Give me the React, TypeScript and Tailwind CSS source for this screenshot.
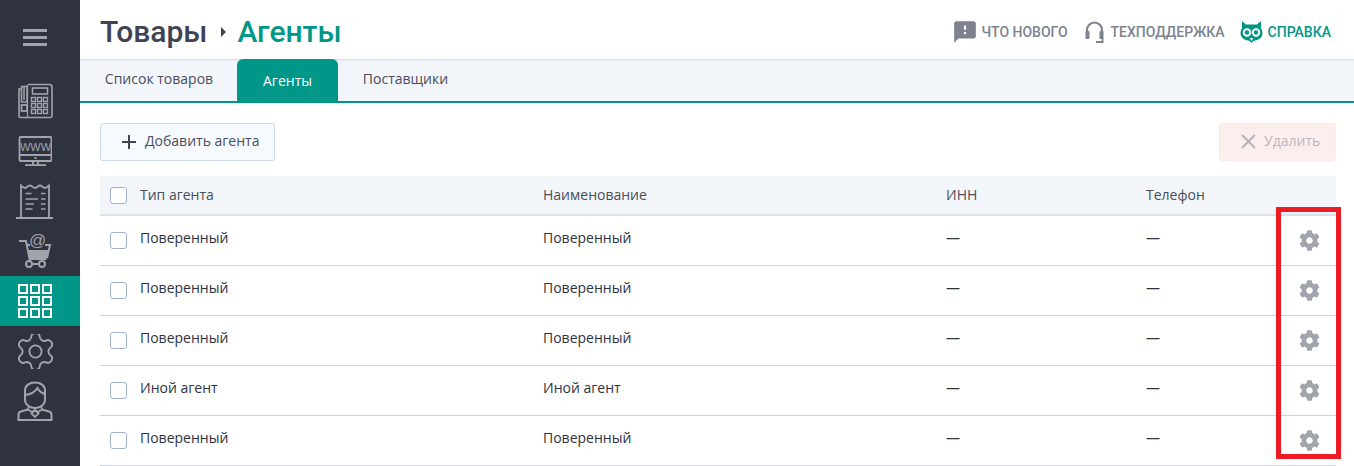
import { FaCog } from "react-icons/fa";
import { MdFeedback } from "react-icons/md";

const rows = [
  { type: "Поверенный", name: "Поверенный" },
  { type: "Поверенный", name: "Поверенный" },
  { type: "Поверенный", name: "Поверенный" },
  { type: "Иной агент", name: "Иной агент" },
  { type: "Поверенный", name: "Поверенный" },
];

const gridCols = "grid grid-cols-[443px_403px_200px_1fr]";
const keypad = [0, 1, 2].flatMap((r) => [0, 1, 2].map((c) => ({ x: 14.5 + c * 6, y: 14.5 + r * 6 })));

function Checkbox() {
  return (
    <span className="block w-[17px] h-[17px] rounded-[3px] border border-[#9fb3d1] bg-white" />
  );
}

function PhoneIcon() {
  return (
    <svg width="36" height="36" viewBox="0 0 36 36" fill="none" stroke="#a2a4ab" strokeWidth="1.6">
      <path d="M4 6H2v27a1.500 1.500 0 0 0 1.500 1.500h30a1.500 1.500 0 0 0 1.500-1.500V4a2.500 2.500 0 0 0-2.500-2.500H11" />
      <path d="M4.500 19V3.500h5.500V19zM7 3.500V17" strokeWidth="1.500" />
      <rect x="4.500" y="22" width="5.500" height="6" strokeWidth="1.800" />
      <path d="M10.500 2v32.500" strokeWidth="1.200" />
      <rect x="15.500" y="5" width="15" height="6" />
      {keypad.map((k) => (
        <rect key={`${k.x}-${k.y}`} x={k.x} y={k.y} width="4" height="4" strokeWidth="1.400" />
      ))}
    </svg>
  );
}

function WwwIcon() {
  return (
    <div className="relative w-[34px] h-[30px]">
      <svg width="34" height="30" viewBox="0 0 34 30" fill="none" stroke="#a2a4ab" strokeWidth="1.800">
        <rect x="1.500" y="1" width="32" height="24" rx="1" />
        <path d="M1.500 19h32M15 25v4M20 25v4M7 29.200h21" />
        <rect x="16.500" y="21" width="2" height="2" fill="#a2a4ab" stroke="none" />
      </svg>
      <span className="absolute left-[1px] right-0 top-[4px] text-center text-[11px] leading-[14px] text-[#a2a4ab] font-['Liberation_Sans',sans-serif]">
        WWW
      </span>
    </div>
  );
}

function ReceiptIcon() {
  return (
    <svg width="38" height="36" viewBox="0 0 38 36" fill="none" stroke="#a2a4ab" strokeWidth="1.800">
      <path d="M5 35V2.500c1.500 1.500 2.500 2.500 4 2.500s2.500-2.500 5-2.500 3 2.500 5 2.500 3-2.500 5-2.500 3 2.500 5 2.500c1 0 2.500-1 4-2.500V35" />
      <path d="M0 35h37" strokeWidth="2" />
      <path d="M9.500 10.500h6M25 10.500h4.500M9.500 16h12.500M25 16h4.500M9.500 21h8.500M25 21h4.500M9.500 26h7M25 26h4.500" strokeWidth="1.600" />
    </svg>
  );
}

function CartIcon() {
  return (
    <div className="relative w-[34px] h-[34px]">
      <svg width="34" height="34" viewBox="0 0 34 34" fill="none" stroke="#a2a4ab" strokeWidth="2">
        <path d="M1 7h7l3.500 18h17" />
        <path d="M9 11h3M27 11h5l-3 13" />
        <path d="M10.500 16h20l-1.500 8H11.500z" fill="#a2a4ab" stroke="none" />
        <circle cx="11" cy="30" r="3" />
        <circle cx="24" cy="30" r="3" />
        <path d="M14 30h7" />
      </svg>
      <span className="absolute left-[11px] top-[-3px] text-[17px] leading-[20px] text-[#a2a4ab] font-['Liberation_Sans',sans-serif]">
        @
      </span>
    </div>
  );
}

function GridIcon() {
  return (
    <svg width="34" height="34" viewBox="0 0 34 34" fill="none" stroke="#ffffff" strokeWidth="2">
      <rect x="1" y="1" width="8" height="8" />
      <rect x="13" y="1" width="8" height="8" />
      <rect x="25" y="1" width="8" height="8" />
      <rect x="1" y="13" width="8" height="8" />
      <rect x="13" y="13" width="8" height="8" />
      <rect x="25" y="13" width="8" height="8" />
      <rect x="1" y="25" width="8" height="8" />
      <rect x="13" y="25" width="8" height="8" />
      <rect x="25" y="25" width="8" height="8" />
    </svg>
  );
}

function GearOutlineIcon() {
  return (
    <svg width="35" height="35" viewBox="2.500 2.500 19 19" fill="none" stroke="#a2a4ab" strokeWidth="1" strokeLinecap="round" strokeLinejoin="round">
      <path d="M9.671 4.136a2.34 2.34 0 0 1 4.659 0 2.34 2.34 0 0 0 3.319 1.915 2.34 2.34 0 0 1 2.33 4.033 2.34 2.34 0 0 0 0 3.831 2.34 2.34 0 0 1-2.33 4.033 2.34 2.34 0 0 0-3.319 1.915 2.34 2.34 0 0 1-4.659 0 2.34 2.34 0 0 0-3.32-1.915 2.34 2.34 0 0 1-2.33-4.033 2.34 2.34 0 0 0 0-3.831A2.34 2.34 0 0 1 6.35 6.051a2.34 2.34 0 0 0 3.319-1.915" />
      <circle cx="12" cy="12" r="3.300" />
    </svg>
  );
}

function UserIcon() {
  return (
    <svg width="36" height="40" viewBox="0 0 36 40" fill="none" stroke="#a2a4ab" strokeWidth="2">
      <path d="M8 19V9.500C8 4.500 12.500 1.500 18 1.500S28 4.500 28 9.500V19c0 4.500-5 8-10 8s-10-3.500-10-8z" />
      <path d="M8 14c5-.5 10-3 12.500-7 1.500 3 4 5 7.500 6" />
      <path d="M12 25l-1 3.500 4 2.500 3-2 3 2 4-2.500-1-3.500" strokeWidth="1.800" />
      <path d="M18 29l-3.500 3.500L18 36l3.500-3.500z" strokeWidth="1.800" />
      <path d="M11 28.500l-7 2C2 31 1.500 32 1.500 34v5h33v-5c0-2-.5-3-2.500-3.500l-7-2" />
    </svg>
  );
}

function HeadsetIcon() {
  return (
    <svg width="19" height="22" viewBox="0 0 19 22" fill="none" stroke="#7c828e">
      <path d="M2 13V9a7.500 7.500 0 0 1 15 0v4" strokeWidth="2.200" />
      <rect x="0.500" y="10" width="4" height="8" rx="1" fill="#7c828e" stroke="none" />
      <rect x="14.500" y="10" width="4" height="8" rx="1" fill="#7c828e" stroke="none" />
      <path d="M17.500 17v4H11" strokeWidth="1.800" />
    </svg>
  );
}

function OwlIcon() {
  return (
    <svg width="23" height="22" viewBox="0 0 23 22">
      <path d="M2 0l4 3.500h11L21 0v7c2 3 2 7 0 9.500-2 2.500-5.500 3-7.500 3.500L11.500 22l-2-2c-2-.5-5.500-1-7.500-3.500C0 14 0 10 2 7z" fill="#009688" />
      <circle cx="7" cy="11.500" r="4.200" fill="#fff" />
      <circle cx="16" cy="11.500" r="4.200" fill="#fff" />
      <circle cx="7" cy="11.500" r="2.200" fill="#009688" />
      <circle cx="16" cy="11.500" r="2.200" fill="#009688" />
      <path d="M9.800 17h3.400l-1.700 3z" fill="#fff" />
    </svg>
  );
}

export default function App() {
  return (
    <div className="relative flex w-[1354px] h-[466px] overflow-hidden bg-white font-['Open_Sans',sans-serif]">
      <aside className="w-20 shrink-0 bg-[#2f3340] flex flex-col">
        <div className="h-[76px] flex items-center justify-center pr-[10px] pb-[1px]">
          <span className="flex flex-col gap-[4px] w-6">
            <span className="h-[3px] bg-[#a2a4ab]" />
            <span className="h-[3px] bg-[#a2a4ab]" />
            <span className="h-[3px] bg-[#a2a4ab]" />
          </span>
        </div>
        <div className="h-[50px] flex items-center justify-center pr-[10px]">
          <PhoneIcon />
        </div>
        <div className="h-[50px] flex items-center justify-center pr-[10px]">
          <WwwIcon />
        </div>
        <div className="h-[50px] flex items-center justify-center pr-[10px]">
          <ReceiptIcon />
        </div>
        <div className="h-[50px] flex items-center justify-center pr-[10px]">
          <CartIcon />
        </div>
        <div className="h-[50px] flex items-center justify-center pr-[10px] bg-[#009688]">
          <GridIcon />
        </div>
        <div className="h-[50px] flex items-center justify-center pr-[10px]">
          <GearOutlineIcon />
        </div>
        <div className="h-[50px] flex items-center justify-center pr-[10px]">
          <UserIcon />
        </div>
      </aside>

      <main className="flex-1 flex flex-col min-w-0">
        <header className="h-[59px] shrink-0 flex items-center justify-between pl-5 pr-[23px] pt-[4px]">
          <div className="flex items-center font-['Roboto',sans-serif] font-medium text-[30px] leading-none">
            <span className="text-[#3f4354]">Товары</span>
            <span className="ml-[14px] mr-[11px] w-0 h-0 border-y-[5px] border-y-transparent border-l-[5px] border-l-[#3f4354]" />
            <span className="text-[#009688]">Агенты</span>
          </div>
          <div className="flex items-center mt-[1px] font-['Roboto',sans-serif] font-medium text-[14px] text-[#7c828e]">
            <span className="flex items-center gap-[6px]">
              <MdFeedback size={26} className="text-[#7c828e] -ml-[2px] -mr-[2px] -mt-[1px]" />
              ЧТО НОВОГО
            </span>
            <span className="flex items-center gap-[7px] ml-[17px]">
              <HeadsetIcon />
              ТЕХПОДДЕРЖКА
            </span>
            <span className="flex items-center gap-[5px] ml-[15px] text-[#009688]">
              <OwlIcon />
              СПРАВКА
            </span>
          </div>
        </header>

        <nav className="h-[44px] shrink-0 flex bg-[#f2f5f9] border-b-2 border-[#009688] pl-[5px] shadow-[inset_0_2px_2px_-1px_rgba(0,0,0,0.12)] text-[14px]">
          <span className="w-[148px] flex items-center justify-center text-[#4a4e5c] pb-[3px]">Список товаров</span>
          <span className="w-[101px] ml-[4px] flex items-center justify-center bg-[#009688] text-white rounded-t-[6px]">Агенты</span>
          <span className="w-[135px] flex items-center justify-center text-[#4a4e5c] pb-[3px]">Поставщики</span>
        </nav>

        <section className="pt-5 pl-5 pr-[18px]">
          <div className="flex justify-between items-center h-[38px]">
            <button className="h-[38px] w-[175px] flex items-center pl-5 pb-[4px] gap-[8px] rounded-[3px] border border-[#cfd9ec] bg-[#f6f9fe] text-[14px] text-[#4a4e5c]">
              <svg width="16" height="16" viewBox="0 0 16 16" stroke="#3f4354" strokeWidth="2" className="mt-[3px]">
                <path d="M8 1v14M1 8h14" />
              </svg>
              Добавить агента
            </button>
            <button className="h-[38px] w-[117px] flex items-center pl-[21px] pb-[4px] gap-[8px] rounded-[3px] border border-[#fbe9e9] bg-[#fdeeee] text-[14px] text-[#b9b6bb]">
              <svg width="15" height="15" viewBox="0 0 15 15" stroke="#b3b1b6" strokeWidth="1.800" className="mt-[3px]">
                <path d="M1 1l13 13M14 1L1 14" />
              </svg>
              Удалить
            </button>
          </div>

          <div className={`${gridCols} mt-[15px] h-10 items-center bg-[#f2f5f9] border-b-2 border-[#dcdfe3] text-[14px] text-[#4a4e5c]`}>
            <div className="flex items-center gap-[13px] pl-[10px]">
              <Checkbox />
              <span className="-mt-[1px]">Тип агента</span>
            </div>
            <span className="-mt-[1px]">Наименование</span>
            <span className="-mt-[1px]">ИНН</span>
            <span className="-mt-[1px]">Телефон</span>
          </div>

          {rows.map((row, i) => (
            <div key={i} className={`${gridCols} h-[50px] items-center border-b border-[#ccd2df] text-[14px] text-[#2f3340]`}>
              <div className="flex items-center gap-[13px] pl-[10px]">
                <Checkbox />
                <span className="-mt-[6px]">{row.type}</span>
              </div>
              <span className="-mt-[6px]">{row.name}</span>
              <span className="-mt-[6px]">—</span>
              <div className="flex items-center justify-between pr-4">
                <span className="-mt-[6px]">—</span>
                <FaCog size={21} className="text-[#a2a4ad]" />
              </div>
            </div>
          ))}
        </section>
      </main>

      <div className="absolute left-[1276px] top-[207px] w-[65px] h-[252px] border-[5px] border-[#ed1c24]" />
    </div>
  );
}
